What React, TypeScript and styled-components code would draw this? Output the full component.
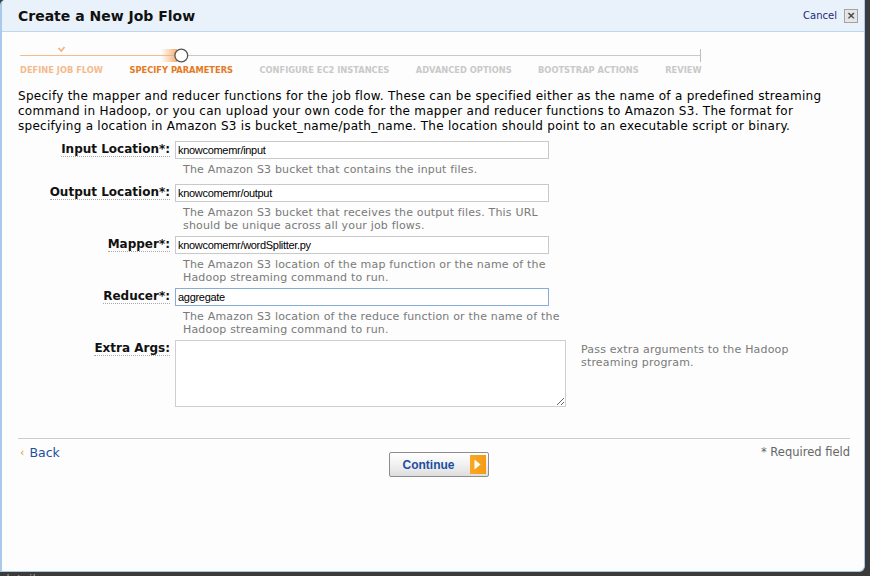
import React from "react";
import styled, { createGlobalStyle } from "styled-components";

const GlobalStyle = createGlobalStyle`
  html, body { margin: 0; padding: 0; background: #3b3b3b; }
  body { font-family: "DejaVu Sans", Verdana, sans-serif; }
`;

const Page = styled.div`
  width: 870px;
  height: 576px;
  overflow: hidden;
  background: #3b3b3b;
  display: flex;
  flex-direction: column;
`;

const Dialog = styled.div`
  width: 862px;
  height: 571px;
  flex: none;
  background: #fcfdfc;
  border: 1px solid #a9c8ea;
  border-left-width: 2px;
  border-top: none;
  border-radius: 5px 0 6px 0;
  display: flex;
  flex-direction: column;
  overflow: hidden;
`;

const Header = styled.div`
  height: 31px;
  flex: none;
  background: #e9f1fb;
  border-bottom: 1px solid #bcd6f0;
  display: flex;
  align-items: center;
  justify-content: space-between;
  padding: 0 6px 0 16px;
`;

const Title = styled.h1`
  margin: 0;
  font: bold 14px "DejaVu Sans", Verdana, sans-serif;
  color: #111;
`;

const HeaderActions = styled.div`
  display: flex;
  align-items: center;
  gap: 7px;
`;

const CancelLink = styled.a`
  font: 10px "DejaVu Sans", Verdana, sans-serif;
  color: #1e2a78;
  text-decoration: none;
`;

const CloseBox = styled.span`
  width: 12px;
  height: 12px;
  border: 1px solid #a3a3a3;
  background: #e6e6e6;
  color: #444;
  font: bold 11px "DejaVu Sans", sans-serif;
  line-height: 12px;
  text-align: center;
`;

const Body = styled.div`
  padding: 0 14px 0 16px;
  display: flex;
  flex-direction: column;
`;

const Steps = styled.div`
  margin: 10px 0 0 2px;
  width: 681px;
`;

const StepLabels = styled.div`
  display: flex;
  gap: 26.4px;
  margin-top: 1px;
`;

const StepLabel = styled.span<{ $state: "done" | "current" | "todo" }>`
  font: bold 8.3px "DejaVu Sans", Verdana, sans-serif;
  line-height: 11px;
  white-space: nowrap;
  color: ${(p) =>
    p.$state === "done" ? "#f5ba8c" : p.$state === "current" ? "#e5791f" : "#c9c9c9"};
`;

const Intro = styled.p`
  margin: 13px 0 0 0;
  font: 12px "DejaVu Sans", Verdana, sans-serif;
  letter-spacing: 0.27px;
  line-height: 15px;
  color: #000;
  white-space: nowrap;
`;

const Form = styled.div`
  margin-top: 7px;
  display: flex;
  flex-direction: column;
`;

const FieldRow = styled.div<{ $extra?: number }>`
  display: grid;
  grid-template-columns: 152px auto;
  column-gap: 5px;
  align-items: start;
  margin-bottom: ${(p) => p.$extra ?? 0}px;
`;

const LabelCell = styled.div`
  display: flex;
  justify-content: flex-end;
  padding-top: 1px;
`;

const Label = styled.label`
  font: bold 12px "DejaVu Sans", Verdana, sans-serif;
  line-height: 14px;
  color: #111;
  border-bottom: 1px dotted #a8a8a8;
  white-space: nowrap;
`;

const FieldCell = styled.div`
  display: flex;
  flex-direction: column;
`;

const TextInput = styled.input<{ $focused?: boolean }>`
  width: 374px;
  height: 18px;
  box-sizing: border-box;
  margin: 0;
  padding: 0 2px;
  border: 1px solid ${(p) => (p.$focused ? "#86acd9" : "#c9c9c9")};
  background: #fff;
  font: 11px "Liberation Sans", Arial, sans-serif;
  letter-spacing: -0.3px;
  color: #000;
  outline: none;
`;

const Help = styled.div`
  padding: 4px 0 4px 8px;
  font: 11px "DejaVu Sans", Verdana, sans-serif;
  letter-spacing: 0.18px;
  line-height: 13px;
  color: #7a7a7a;
  white-space: nowrap;
`;

const ArgsCell = styled.div`
  display: flex;
  gap: 15px;
  align-items: flex-start;
`;

const TextArea = styled.textarea`
  width: 391px;
  height: 67px;
  box-sizing: border-box;
  margin: 0;
  border: 1px solid #cfcfcf;
  background: #fff;
  outline: none;
`;

const SideHelp = styled(Help)`
  padding: 3px 0 0 0;
`;

const Divider = styled.hr`
  margin: 31px 0 0 0;
  border: none;
  border-top: 1px solid #cccccc;
  height: 0;
`;

const Footer = styled.div`
  display: grid;
  grid-template-columns: 1fr auto 1fr;
  align-items: start;
  padding-top: 6px;
`;

const BackLink = styled.a`
  font: 12.5px "DejaVu Sans", Verdana, sans-serif;
  line-height: 15px;
  color: #1c4fa0;
  text-decoration: none;
  display: flex;
  align-items: center;
  gap: 5px;
  padding-left: 2px;
  justify-self: start;
`;

const BackArrow = styled.span`
  color: #f08a24;
  font-size: 11px;
`;

const ContinueButton = styled.button`
  margin: 7px 0 0 9px;
  width: 100px;
  height: 25px;
  box-sizing: border-box;
  padding: 0 2px 0 13px;
  border: 1px solid #8d8d8d;
  border-radius: 2px;
  background: linear-gradient(#ffffff, #f1f1f1 50%, #dedede);
  display: flex;
  align-items: center;
  justify-content: space-between;
  font: bold 12px "Liberation Sans", Arial, sans-serif;
  color: #1b4f9f;
`;

const ArrowTile = styled.span`
  width: 16px;
  height: 19px;
  background: linear-gradient(90deg, #f9a825, #f59b12);
  display: flex;
  align-items: center;
  justify-content: center;
`;

const Required = styled.span`
  justify-self: end;
  font: 11.5px "DejaVu Sans", Verdana, sans-serif;
  line-height: 15px;
  color: #666;
`;

const Behind = styled.div`
  margin: 1px 0 0 2px;
  font: 12px "DejaVu Sans", sans-serif;
  color: #9a9a9a;
`;

const steps: { name: string; state: "done" | "current" | "todo" }[] = [
  { name: "DEFINE JOB FLOW", state: "done" },
  { name: "SPECIFY PARAMETERS", state: "current" },
  { name: "CONFIGURE EC2 INSTANCES", state: "todo" },
  { name: "ADVANCED OPTIONS", state: "todo" },
  { name: "BOOTSTRAP ACTIONS", state: "todo" },
  { name: "REVIEW", state: "todo" },
];

const fields = [
  {
    label: "Input Location*:",
    value: "knowcomemr/input",
    extra: 4,
    help: ["The Amazon S3 bucket that contains the input files."],
  },
  {
    label: "Output Location*:",
    value: "knowcomemr/output",
    help: [
      "The Amazon S3 bucket that receives the output files. This URL",
      "should be unique across all your job flows.",
    ],
  },
  {
    label: "Mapper*:",
    value: "knowcomemr/wordSplitter.py",
    help: [
      "The Amazon S3 location of the map function or the name of the",
      "Hadoop streaming command to run.",
    ],
  },
  {
    label: "Reducer*:",
    value: "aggregate",
    focused: true,
    help: [
      "The Amazon S3 location of the reduce function or the name of the",
      "Hadoop streaming command to run.",
    ],
  },
];

const Track = () => (
  <svg width="681" height="22" viewBox="0 0 681 22" style={{ display: "block" }}>
    <defs>
      <linearGradient id="glow" x1="0" x2="1" y1="0" y2="0">
        <stop offset="0" stopColor="#f7b27a" stopOpacity="0" />
        <stop offset="1" stopColor="#f5a35e" stopOpacity="0.9" />
      </linearGradient>
    </defs>
    <path d="M38.5 6 L41.3 9 L44.5 5" fill="none" stroke="#f3b078" strokeWidth="1.6" />
    <line x1="0" y1="13.5" x2="156" y2="13.5" stroke="#f1bd90" strokeWidth="1" />
    <rect x="141" y="7" width="16" height="13" fill="url(#glow)" />
    <line x1="168" y1="13.5" x2="680" y2="13.5" stroke="#c9c9c9" strokeWidth="1" />
    <line x1="680.5" y1="7" x2="680.5" y2="20" stroke="#bdbdbd" strokeWidth="1" />
    <circle cx="161.3" cy="13.5" r="6.4" fill="#fff" stroke="#555" strokeWidth="1.3" />
  </svg>
);

export default function App() {
  return (
    <Page>
      <GlobalStyle />
      <Dialog>
        <Header>
          <Title>Create a New Job Flow</Title>
          <HeaderActions>
            <CancelLink href="#">Cancel</CancelLink>
            <CloseBox>×</CloseBox>
          </HeaderActions>
        </Header>
        <Body>
          <Steps>
            <Track />
            <StepLabels>
              {steps.map((s) => (
                <StepLabel key={s.name} $state={s.state}>
                  {s.name}
                </StepLabel>
              ))}
            </StepLabels>
          </Steps>
          <Intro>
            Specify the mapper and reducer functions for the job flow. These can be specified either as the name of a predefined streaming
            <br />
            command in Hadoop, or you can upload your own code for the mapper and reducer functions to Amazon S3. The format for
            <br />
            specifying a location in Amazon S3 is bucket_name/path_name. The location should point to an executable script or binary.
          </Intro>
          <Form>
            {fields.map((f) => (
              <FieldRow key={f.label} $extra={f.extra}>
                <LabelCell>
                  <Label>{f.label}</Label>
                </LabelCell>
                <FieldCell>
                  <TextInput defaultValue={f.value} $focused={f.focused} />
                  <Help>
                    {f.help.map((line, i) => (
                      <div key={i}>{line}</div>
                    ))}
                  </Help>
                </FieldCell>
              </FieldRow>
            ))}
            <FieldRow>
              <LabelCell>
                <Label>Extra Args:</Label>
              </LabelCell>
              <ArgsCell>
                <TextArea />
                <SideHelp>
                  <div>Pass extra arguments to the Hadoop</div>
                  <div>streaming program.</div>
                </SideHelp>
              </ArgsCell>
            </FieldRow>
          </Form>
          <Divider />
          <Footer>
            <BackLink href="#">
              <BackArrow>‹</BackArrow>Back
            </BackLink>
            <ContinueButton>
              Continue
              <ArrowTile>
                <svg width="7" height="11" viewBox="0 0 7 11">
                  <path d="M0.5 0.5 L6.5 5.5 L0.5 10.5 Z" fill="#fff" />
                </svg>
              </ArrowTile>
            </ContinueButton>
            <Required>* Required field</Required>
          </Footer>
        </Body>
      </Dialog>
      <Behind>details</Behind>
    </Page>
  );
}
